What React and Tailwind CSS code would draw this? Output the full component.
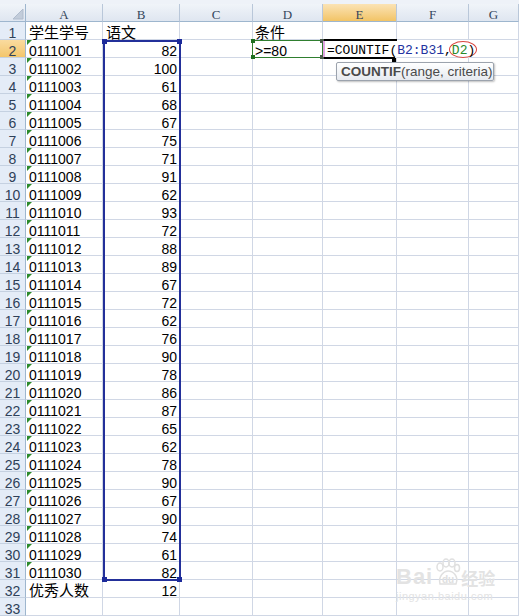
import React from "react";

const data = [
  ["0111001", "82"], ["0111002", "100"], ["0111003", "61"], ["0111004", "68"],
  ["0111005", "67"], ["0111006", "75"], ["0111007", "71"], ["0111008", "91"],
  ["0111009", "62"], ["0111010", "93"], ["0111011", "72"], ["0111012", "88"],
  ["0111013", "89"], ["0111014", "67"], ["0111015", "72"], ["0111016", "62"],
  ["0111017", "76"], ["0111018", "90"], ["0111019", "78"], ["0111020", "86"],
  ["0111021", "87"], ["0111022", "65"], ["0111023", "62"], ["0111024", "78"],
  ["0111025", "90"], ["0111026", "67"], ["0111027", "90"], ["0111028", "74"],
  ["0111029", "61"], ["0111030", "82"],
];

function Cell({ w, className = "", noRight = false, children }) {
  return (
    <div
      className={`relative h-full shrink-0 border-b border-[#d0d7e5] flex items-end leading-[12px] whitespace-nowrap ${
        noRight ? "border-r border-r-transparent" : "border-r"
      } ${w} ${className}`}
    >
      {children}
    </div>
  );
}

function ColHead({ w, label, active }) {
  return (
    <div
      className={`h-full shrink-0 border-b border-r border-b-[#9eb6ce] border-r-[#b9c7d9] flex items-end justify-center leading-[12px] text-[13px] font-['Liberation_Serif',serif] text-[#34465c] ${
        active
          ? "bg-linear-to-b from-[#fbe3b4] to-[#f2c465]"
          : "bg-linear-to-b from-[#f0f4f9] to-[#dfe6f0]"
      } ${w}`}
    >
      {label}
    </div>
  );
}

function RowHead({ n, active }) {
  return (
    <div
      className={`w-[26px] h-full shrink-0 border-b border-r border-b-[#c5d1e1] border-r-[#9eb6ce] flex items-end justify-center leading-[12px] text-[14px] text-[#2f4159] ${
        active ? "bg-linear-to-b from-[#fadb9f] to-[#f3c66b]" : "bg-[#e4ecf7]"
      }`}
    >
      {n}
    </div>
  );
}

function Tri() {
  return (
    <div className="absolute top-0 left-[1px] w-0 h-0 border-t-[5px] border-t-[#2b8a2b] border-r-[5px] border-r-transparent" />
  );
}

export default function App() {
  const rows = [];
  for (let r = 1; r <= 33; r++) {
    let a = null, b = null, d = null, tri = false, cjkA = false, cjkB = false;
    if (r === 1) {
      a = "学生学号"; b = "语文"; d = "条件"; cjkA = true; cjkB = true;
    } else if (r >= 2 && r <= 31) {
      a = data[r - 2][0]; b = data[r - 2][1]; tri = true;
    } else if (r === 32) {
      a = "优秀人数"; b = "12"; cjkA = true;
    }
    const isR2 = r === 2;
    rows.push(
      <div key={r} className="flex h-[18px]">
        <RowHead n={r} active={isR2} />
        <Cell w="w-[77px]" className={`pl-[3px] ${cjkA ? "text-[15px]" : ""}`}>
          {tri && <Tri />}
          {a}
        </Cell>
        <Cell w="w-[77px]" className={`${cjkB ? "pl-[3px] text-[15px]" : "justify-end pr-[2px]"}`}>
          {b}
        </Cell>
        <Cell w="w-[73px]" />
        <Cell w="w-[70px]" className={`pl-[2px] ${r === 1 ? "text-[15px]" : ""}`}>
          {d || (isR2 ? ">=80" : null)}
        </Cell>
        <Cell w="w-[74px]" noRight={isR2} className="pl-[4px]">
          {isR2 && (
            <span className="font-['Liberation_Mono',monospace] text-[13px] relative z-10">
              =COUNTIF(
              <span className="text-[#2233a0]">B2:B31</span>,
              <span className="text-[#2a8a2a]">D2</span>)
            </span>
          )}
        </Cell>
        <Cell w="w-[72px]" noRight={isR2} />
        <Cell w="flex-1 min-w-0" />
      </div>
    );
  }

  return (
    <div className="relative w-[519px] h-[616px] overflow-hidden bg-white font-['Liberation_Sans','Noto_Sans_CJK_SC',sans-serif] text-[14px] text-black">
      <div className="h-[4px] bg-[#eef2f8]" />
      <div className="flex h-[18px]">
        <div className="relative w-[26px] h-full shrink-0 border-b border-r border-[#9eb6ce] bg-linear-to-b from-[#f0f4f9] to-[#dfe6f0]">
          <svg className="absolute left-0 top-0" width="26" height="18" viewBox="0 0 26 18">
            <polygon points="23,5 23,15 13,15" fill="#c2ccda" stroke="#b0bccd" strokeWidth="1" />
          </svg>
        </div>
        <ColHead w="w-[77px]" label="A" />
        <ColHead w="w-[77px]" label="B" />
        <ColHead w="w-[73px]" label="C" />
        <ColHead w="w-[70px]" label="D" />
        <ColHead w="w-[74px]" label="E" active />
        <ColHead w="w-[72px]" label="F" />
        <ColHead w="flex-1 min-w-0" label="G" />
      </div>
      {rows}

      {/* B2:B31 range highlight */}
      <div className="absolute left-[103px] top-[40px] w-[78px] h-[541px] border-2 border-[#23309a] pointer-events-none" />
      <div className="absolute left-[102px] top-[39px] w-[5px] h-[5px] bg-[#1c2a9a]" />
      <div className="absolute left-[177px] top-[39px] w-[5px] h-[5px] bg-[#1c2a9a]" />
      <div className="absolute left-[102px] top-[577px] w-[5px] h-[5px] bg-[#1c2a9a]" />
      <div className="absolute left-[177px] top-[577px] w-[5px] h-[5px] bg-[#1c2a9a]" />

      {/* D2 range highlight */}
      <div className="absolute left-[252px] top-[40px] w-[71px] h-[18px] border border-[#2f7f2f]" />
      <div className="absolute left-[251px] top-[39px] w-[4px] h-[4px] bg-[#1f6f1f]" />
      <div className="absolute left-[251px] top-[55px] w-[4px] h-[4px] bg-[#1f6f1f]" />
      <div className="absolute left-[320px] top-[39px] w-[4px] h-[4px] bg-[#4a5a4a]" />
      <div className="absolute left-[320px] top-[55px] w-[4px] h-[4px] bg-[#4a5a4a]" />

      {/* E2 active cell */}
      <div className="absolute left-[324px] top-[39px] w-[73px] h-[2px] bg-black" />
      <div className="absolute left-[324px] top-[57px] w-[71px] h-[2px] bg-black" />
      <div className="absolute left-[323px] top-[41px] w-[2px] h-[16px] bg-[#e2a6e2]" />
      <div className="absolute left-[392px] top-[58px] w-[4px] h-[4px] bg-black" />

      {/* red annotation circle */}
      <div className="absolute left-[449px] top-[41px] w-[28px] h-[17px] rounded-[50%] border border-[#d9463f]" />

      {/* tooltip */}
      <div className="absolute left-[336px] top-[62px] w-[158px] h-[19px] rounded-[2px] border border-[#9ca3ad] bg-linear-to-b from-white to-[#e6eaf0] shadow-[1px_1px_2px_rgba(0,0,0,0.25)] flex items-center pl-[4px] text-[13.5px] leading-none text-[#4a4a4a] whitespace-nowrap">
        <span className="font-bold">COUNTIF</span>
        <span>(range, criteria)</span>
      </div>

      {/* watermark */}
      <div className="absolute left-[396px] top-[558px] flex flex-col items-start text-[#e3e3e3] pointer-events-none">
        <div className="flex items-end h-[30px]">
          <span className="text-[22px] font-bold leading-none tracking-[1px]">Bai</span>
          <svg width="30" height="30" viewBox="0 0 30 30" className="-mx-[1px]">
            <ellipse cx="8" cy="9" rx="3" ry="4" fill="none" stroke="#e0e0e0" strokeWidth="1.5" />
            <ellipse cx="14" cy="5" rx="3" ry="4" fill="none" stroke="#e0e0e0" strokeWidth="1.5" />
            <ellipse cx="20" cy="5" rx="3" ry="4" fill="none" stroke="#e0e0e0" strokeWidth="1.5" />
            <ellipse cx="25" cy="10" rx="2.5" ry="3.5" fill="none" stroke="#e0e0e0" strokeWidth="1.5" />
            <path d="M8 26 C6 18 12 13 16 13 C21 13 27 18 24 26 Z" fill="none" stroke="#e0e0e0" strokeWidth="1.5" />
            <text x="10" y="25" fontSize="10" fontWeight="bold" fill="#e0e0e0" fontFamily="Liberation Sans, sans-serif">du</text>
          </svg>
          <span className="text-[17px] font-bold leading-none">经验</span>
        </div>
        <div className="text-[11px] leading-none mt-[3px] tracking-[0.5px]">jingyan.baidu.com</div>
      </div>
    </div>
  );
}
